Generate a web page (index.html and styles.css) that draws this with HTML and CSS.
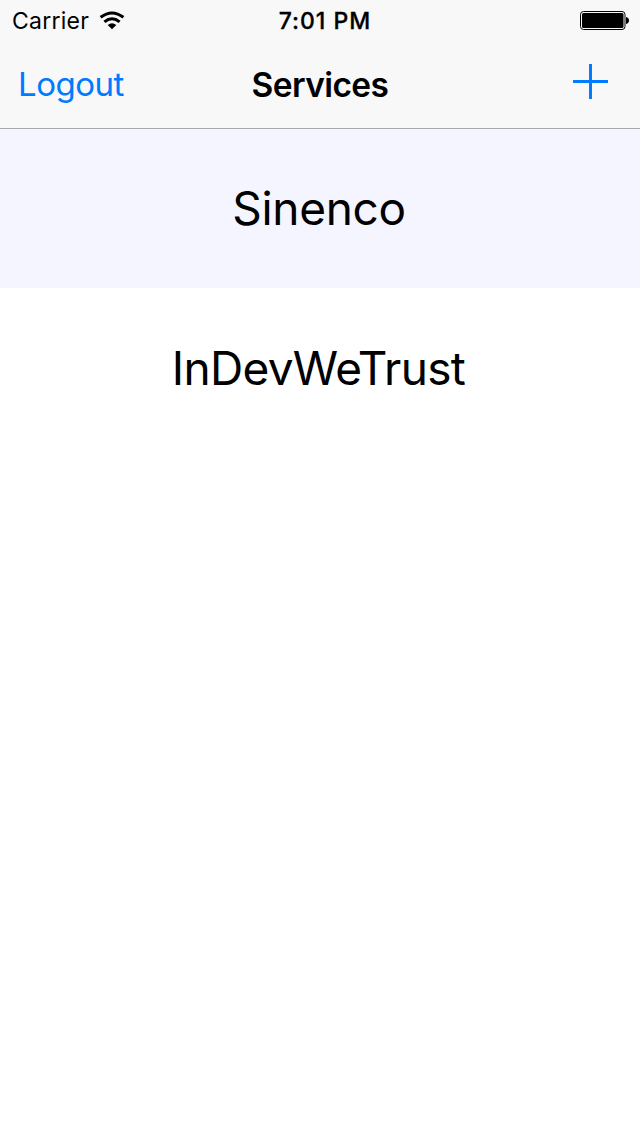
FILE: index.html
```html
<!DOCTYPE html>
<html lang="en">
<head>
<meta charset="utf-8">
<title>Services</title>
<link rel="stylesheet" href="styles.css">
</head>
<body>
<header class="header">
  <div class="status">
    <div class="status-left">
      <span class="carrier">Carrier</span>
      <svg class="wifi" width="26" height="20" viewBox="0 0 26 20">
        <path class="wifi-arc" d="M1.6 6.3Q13 -2.4 24.4 6.3M5.4 10.8Q13 4.7 20.6 10.8"/>
        <path d="M8.7 14Q13 10.6 17.3 14L13 18.3Z"/>
      </svg>
    </div>
    <span class="time">7:01 PM</span>
    <svg class="battery" width="50" height="20" viewBox="0 0 50 20">
      <rect class="battery-case" x=".5" y=".5" width="44.5" height="18" rx="3"/>
      <rect x="2" y="2" width="41.5" height="15" rx="1.5"/>
      <path d="M46 6Q49 6.8 49 9.5T46 13Z"/>
    </svg>
  </div>
  <nav class="navbar">
    <a class="logout">Logout</a>
    <h1 class="title">Services</h1>
    <svg class="add" width="35" height="35" viewBox="0 0 35 35"><path d="M0 17.5H35M17.5 0V35"/></svg>
  </nav>
</header>
<main class="services">
  <div class="service selected"><span class="sinenco">Sinenco</span></div>
  <div class="service"><span class="indev">InDevWeTrust</span></div>
</main>
</body>
</html>
```
FILE: styles.css
```css
* { box-sizing: border-box; }
body { margin: 0; background: #fff; color: #000; font-family: Inter, sans-serif; }
.header { height: 129px; background: #f8f8f8; border-bottom: 1px solid #a8a8ad; }
.status { display: grid; grid-template-columns: 1fr auto 1fr; height: 41px; align-items: center; padding: 1px 10px 0 12px; }
.status-left { display: flex; align-items: center; gap: 10px; }
.carrier { font-size: 23px; line-height: 40px; letter-spacing: .25px; }
.time { margin-left: 8px; font-size: 23px; font-weight: 500; line-height: 40px; letter-spacing: 1px; -webkit-text-stroke: .3px #000; }
.battery { justify-self: end; }
.battery-case { fill: none; stroke: #000; }
.wifi-arc { fill: none; stroke: #000; stroke-width: 3; }
.navbar { display: grid; grid-template-columns: 1fr auto 1fr; height: 87px; align-items: center; padding: 0 18px; }
.logout { margin: 0 0 2px 0; color: #007aff; font-size: 33px; letter-spacing: -.5px; }
.title { margin: 0; font-size: 33.5px; font-weight: 600; letter-spacing: -.6px; }
.add { justify-self: end; margin: 0 14px 7px 0; stroke: #007aff; stroke-width: 3; }
.service { display: flex; height: 160px; align-items: center; justify-content: center; font-size: 46px; }
.selected { height: 159px; padding-bottom: 1px; background: #f4f5ff; }
.sinenco { letter-spacing: -.3px; margin-right: 2px; }
.indev { letter-spacing: -.7px; margin-right: 3px; }
```
